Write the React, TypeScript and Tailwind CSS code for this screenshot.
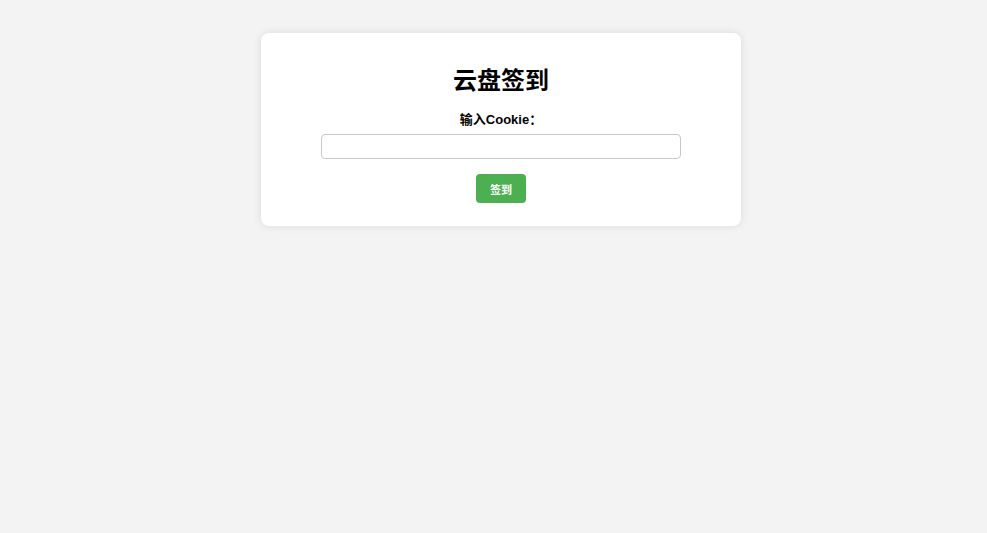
import React, { useState } from 'react';

export default function App() {
  const [cookie, setCookie] = useState('');

  return (
    <div className="min-h-[533px] bg-[#f3f3f3] pt-[33px] pl-[15px] font-['Liberation_Sans','Noto_Sans_CJK_SC',sans-serif]">
      {/* Card */}
      <div className="mx-auto w-[480px] rounded-lg bg-white pt-[33px] pb-[23px] shadow-[0_0_8px_rgba(0,0,0,0.1)] flex flex-col items-center">
        <h2 className="text-[24px] leading-[30px] font-bold text-black">云盘签到</h2>

        <label htmlFor="cookie" className="mt-[15px] text-[13px] leading-[18px] font-bold text-black">
          输入Cookie：
        </label>

        <input
          id="cookie"
          type="text"
          value={cookie}
          onChange={(e) => setCookie(e.target.value)}
          className="mt-[5px] w-[360px] h-[25px] rounded border border-[#c8c8c8] px-2 text-[13px] outline-none"
        />

        <button className="mt-[15px] w-[50px] h-[29px] rounded bg-[#4caf50] pt-[3px] text-[11px] font-bold text-white">
          签到
        </button>
      </div>
    </div>
  );
}
